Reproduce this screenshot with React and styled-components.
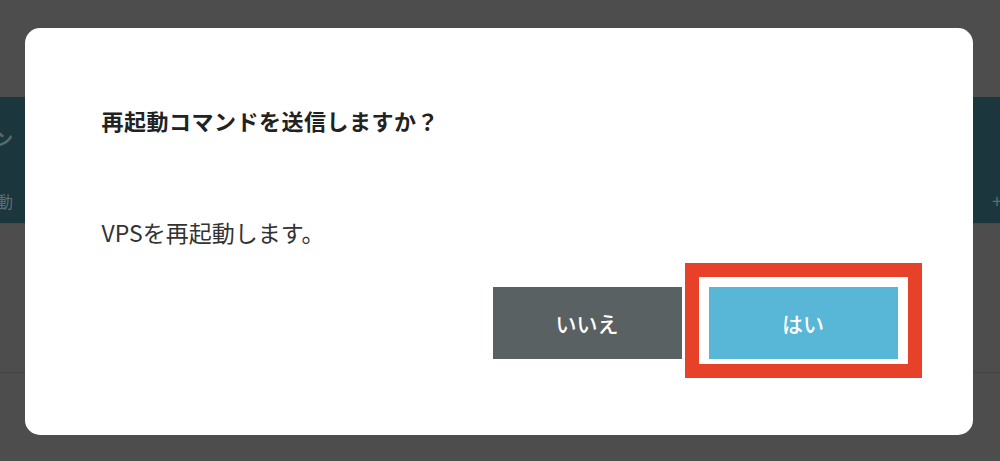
import React from 'react'
import styled, { createGlobalStyle } from 'styled-components';

const GlobalStyle = createGlobalStyle`
    html, body {
        margin: 0;
        padding: 0;
        background: #4d4d4d;
    }
    body {
        font-family: "Noto Sans CJK JP", "Noto Sans", sans-serif;
    }
`;

function App() {
    return (
        <PageStyled>
            <GlobalStyle />
            <div className="backdrop">
                <div className="top-gap" />
                <div className="band">
                    <div className="band-left">
                        <span className="band-title">ン</span>
                        <span className="band-label">再起動</span>
                    </div>
                    <div className="band-right">
                        <span className="band-plus">+</span>
                    </div>
                </div>
                <div className="table-area" />
                <div className="footer-area" />
            </div>

            <Overlay>
                <Modal>
                    <Title>再起動コマンドを送信しますか？</Title>
                    <Message>VPSを再起動します。</Message>
                    <ButtonRow>
                        <Button $variant="cancel">いいえ</Button>
                        <Highlight>
                            <Button $variant="ok">はい</Button>
                        </Highlight>
                    </ButtonRow>
                </Modal>
            </Overlay>
        </PageStyled>
    );
}

const PageStyled = styled.div`
    position: relative;
    width: 100%;
    height: 461px;
    overflow: hidden;

    .backdrop{
        display: flex;
        flex-direction: column;
        height: 100%;
        .top-gap{
            height: 97px;
        }
        .band{
            height: 126px;
            background: #1b363d;
            border-bottom: 1px solid #444a4b;
            display: flex;
            justify-content: space-between;
            .band-left{
                width: 13px;
                overflow: hidden;
                display: flex;
                flex-direction: column;
                align-items: flex-end;
                color: #5e6d71;
                .band-title{
                    margin-top: 28px;
                    font-size: 18px;
                    font-weight: 700;
                    color: #58686b;
                    white-space: nowrap;
                }
                .band-label{
                    margin-top: 38px;
                    font-size: 16px;
                    white-space: nowrap;
                }
            }
            .band-right{
                width: 8px;
                overflow: hidden;
                color: #5e6d71;
                .band-plus{
                    display: block;
                    margin-top: 92px;
                    font-size: 18px;
                    line-height: 22px;
                }
            }
        }
        .table-area{
            height: 148px;
            border-bottom: 1px solid #434343;
        }
        .footer-area{
            flex: 1;
        }
    }
`;

const Overlay = styled.div`
    position: absolute;
    inset: 0;
    display: flex;
    align-items: center;
    justify-content: center;
`;

const Modal = styled.div`
    width: 948px;
    height: 407px;
    box-sizing: border-box;
    margin: 2px 0 0 -3px;
    padding: 76px 75px 76px 77px;
    background: #ffffff;
    border-radius: 15px;
    display: flex;
    flex-direction: column;
`;

const Title = styled.h2`
    margin: 0;
    font-size: 22px;
    letter-spacing: 0.5px;
    line-height: 32px;
    font-weight: 700;
    color: #222222;
`;

const Message = styled.p`
    margin: 81px 0 0;
    font-size: 23px;
    line-height: 30px;
    color: #333333;
`;

const ButtonRow = styled.div`
    margin-top: 40px;
    display: flex;
    justify-content: flex-end;
    gap: 27px;
`;

const Button = styled.button`
    width: 189px;
    height: 72px;
    border: none;
    border-radius: 0;
    padding: 0;
    font-family: "Noto Sans CJK JP", sans-serif;
    font-size: 21px;
    font-weight: 500;
    color: #ffffff;
    background: ${({ $variant }) => ($variant === 'ok' ? '#58b6d6' : '#5a6163')};
    cursor: pointer;
`;

const Highlight = styled.div`
    position: relative;
    display: flex;

    &::after{
        content: '';
        position: absolute;
        top: -24px;
        left: -24px;
        right: -24px;
        bottom: -19px;
        border: 14px solid #e8412a;
        pointer-events: none;
    }
`;

export default App;
